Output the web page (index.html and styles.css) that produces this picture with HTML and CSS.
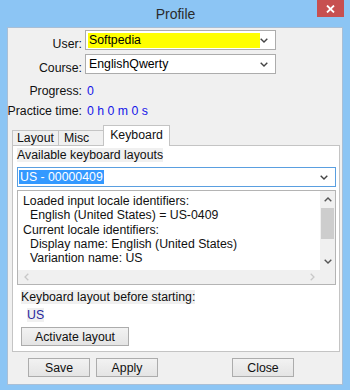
FILE: index.html
```html
<!DOCTYPE html>
<html lang="en">

<head>
  <meta charset="UTF-8" />
  <title>Profile</title>
  <link rel="stylesheet" href="styles.css">
</head>

<body>
  <div class="window">
    <div class="titlebar">
      <span></span>
      <span class="title">Profile</span>
      <span class="close">
        <svg width="9" height="8" viewBox="0 0 9 8">
          <path d="M1 0.5 L8 7.5 M8 0.5 L1 7.5" stroke="#fff" stroke-width="1.8" />
        </svg>
      </span>
    </div>

    <div class="client">
      <div class="form">
        <label class="lbl">User:</label>
        <div class="combo">
          <span class="edit yellow">Softpedia</span>
          <svg class="arrow" width="8" height="5" viewBox="0 0 8 5">
            <path d="M0.7 0.7 L4 4 L7.3 0.7" fill="none" stroke="#444" stroke-width="1.4" />
          </svg>
        </div>
        <label class="lbl">Course:</label>
        <div class="combo">
          <span class="edit">EnglishQwerty</span>
          <svg class="arrow" width="8" height="5" viewBox="0 0 8 5">
            <path d="M0.7 0.7 L4 4 L7.3 0.7" fill="none" stroke="#444" stroke-width="1.4" />
          </svg>
        </div>
        <label class="lbl plain">Progress:</label>
        <span class="value">0</span>
        <label class="lbl plain">Practice time:</label>
        <span class="value">0 h 0 m 0 s</span>
      </div>

      <div class="tabs">
        <div class="tab">Layout</div>
        <div class="tab">Misc</div>
        <div class="tab active">Keyboard</div>
      </div>

      <div class="panel">
        <span class="grey-lbl">Available keyboard layouts</span>
        <div class="combo wide focus">
          <span class="sel">US - 00000409</span>
          <svg class="arrow" width="8" height="5" viewBox="0 0 8 5">
            <path d="M0.7 0.7 L4 4 L7.3 0.7" fill="none" stroke="#444" stroke-width="1.4" />
          </svg>
        </div>

        <div class="textbox">
          <div class="text">
            <div>Loaded input locale identifiers:</div>
            <div class="ind">English (United States) = US-0409</div>
            <div>Current locale identifiers:</div>
            <div class="ind">Display name: English (United States)</div>
            <div class="ind">Variantion name: US</div>
          </div>
          <div class="vscroll">
            <svg class="sarrow" width="8" height="5" viewBox="0 0 8 5">
              <path d="M0.7 4.3 L4 1 L7.3 4.3" fill="none" stroke="#555" stroke-width="1.4" />
            </svg>
            <div class="thumb"></div>
            <div class="track"></div>
            <svg class="sarrow" width="8" height="5" viewBox="0 0 8 5">
              <path d="M0.7 0.7 L4 4 L7.3 0.7" fill="none" stroke="#555" stroke-width="1.4" />
            </svg>
          </div>
          <div class="hscroll">
            <svg width="5" height="8" viewBox="0 0 5 8">
              <path d="M4.3 0.7 L1 4 L4.3 7.3" fill="none" stroke="#c8c8c8" stroke-width="1.3" />
            </svg>
            <svg width="5" height="8" viewBox="0 0 5 8">
              <path d="M0.7 0.7 L4 4 L0.7 7.3" fill="none" stroke="#c8c8c8" stroke-width="1.3" />
            </svg>
          </div>
          <div class="corner"></div>
        </div>

        <span class="grey-lbl before">Keyboard layout before starting:</span>
        <span class="grey-lbl us">US</span>
        <button class="btn activate">Activate layout</button>
      </div>

      <div class="buttons">
        <button class="btn">Save</button>
        <button class="btn">Apply</button>
        <button class="btn close-btn">Close</button>
      </div>
    </div>
  </div>
</body>

</html>
```

FILE: styles.css
```css
* {
  margin: 0;
  padding: 0;
  box-sizing: border-box;
}

body {
  width: 350px;
  height: 390px;
  overflow: hidden;
  font-family: 'Liberation Sans', Arial, sans-serif;
  font-size: 12.3px;
  color: #000;
}

.window {
  width: 350px;
  height: 390px;
  background: #8cc5f4;
  display: flex;
  flex-direction: column;
  padding: 0 7px 5px 7px;
}

.titlebar {
  height: 27px;
  display: grid;
  grid-template-columns: 1fr auto 1fr;
  align-items: start;
  margin-right: -1px;
}

.title {
  font-size: 14px;
  color: #2b2b2b;
  padding-top: 6px;
}

.close {
  justify-self: end;
  width: 27px;
  height: 17px;
  background: #c75050;
  display: flex;
  align-items: center;
  justify-content: center;
}

.client {
  flex: 1;
  background: #f0f0f0;
  border: 1px solid #a9bfd6;
  display: flex;
  flex-direction: column;
}

/* top form */
.form {
  display: grid;
  grid-template-columns: 80px 191px;
  grid-template-rows: 20px 24px 27px 20px;
  column-gap: 3px;
  padding-top: 2px;
  margin-left: -6px;
}

.lbl {
  text-align: right;
  align-self: end;
  white-space: nowrap;
  line-height: 14px;
  margin-bottom: -1px;
  color: #111;
}

.lbl.plain,
.value {
  line-height: 20px;
  margin-bottom: 0;
}

.value {
  align-self: end;
  color: #1515e8;
  padding-left: 2px;
}

.combo {
  height: 20px;
  align-self: end;
  background: #fff;
  border: 1px solid #acacac;
  display: flex;
  align-items: center;
  padding-left: 2px;
}

.combo .edit {
  flex: 1;
  height: 15px;
  line-height: 15px;
  padding-left: 1px;
}

.combo .yellow {
  background: #ffff00;
  flex: 0 0 172px;
}

.combo .arrow {
  margin-left: auto;
  margin-right: 7px;
}

/* tabs */
.tabs {
  display: flex;
  align-items: flex-end;
  margin: 4px 0 0 4px;
  height: 20px;
}

.tab {
  height: 15px;
  border: 1px solid #c4c4c4;
  border-bottom: none;
  background: #f0f0f0;
  line-height: 14px;
  text-align: center;
  color: #111;
}

.tab:nth-child(1) {
  width: 47px;
}

.tab:nth-child(2) {
  width: 46px;
  margin-left: -1px;
  text-align: left;
  padding-left: 5px;
}

.tab.active {
  width: 67px;
  height: 21px;
  margin-left: -1px;
  margin-bottom: -1px;
  background: #fff;
  line-height: 18px;
  position: relative;
  z-index: 1;
}

.panel {
  margin-left: 4px;
  width: 328px;
  height: 207px;
  background: #fff;
  border: 1px solid #c4c4c4;
  display: flex;
  flex-direction: column;
  align-items: flex-start;
  padding: 2px 3px 0 4px;
}

.grey-lbl {
  background: #f0f0f0;
  line-height: 14px;
  color: #111;
}

.combo.wide {
  align-self: stretch;
  margin-top: 5px;
  padding-left: 1px;
}

.combo.focus {
  border-color: #5a9fe0;
}

.sel {
  background: #3399ff;
  color: #fff;
  height: 14px;
  line-height: 14px;
  padding: 0 1px;
}

.textbox {
  align-self: stretch;
  margin-top: 3px;
  height: 95px;
  border: 1px solid #b4b4b4;
  display: grid;
  grid-template-columns: 1fr 15px;
  grid-template-rows: 1fr 14px;
}

.text {
  padding: 3px 0 0 5px;
  line-height: 14.3px;
  color: #111;
  white-space: nowrap;
  overflow: hidden;
}

.text .ind {
  padding-left: 7px;
}

.vscroll {
  background: #f0f0f0;
  display: flex;
  flex-direction: column;
  align-items: center;
}

.sarrow {
  margin: 6px 0;
}

.thumb {
  width: 13px;
  height: 31px;
  background: #cdcdcd;
}

.track {
  flex: 1;
}

.hscroll {
  background: #f0f0f0;
  display: flex;
  justify-content: space-between;
  align-items: center;
  padding: 0 5px 0 6px;
}

.corner {
  background: #f0f0f0;
}

.before {
  margin: 5px 0 0 4px;
}

.us {
  margin: 4px 0 0 10px;
  color: #27279e;
}

.btn {
  font-family: 'Liberation Sans', Arial, sans-serif;
  font-size: 12.3px;
  color: #111;
  height: 19px;
  background: linear-gradient(#f2f2f2, #e4e4e4);
  border: 1px solid #acacac;
}

.activate {
  width: 108px;
  margin: 5px 0 0 4px;
}

.buttons {
  display: flex;
  gap: 6px;
  padding: 6px 0 0 20px;
}

.buttons .btn {
  width: 62px;
}

.buttons .close-btn {
  margin-left: 68px;
}
```
